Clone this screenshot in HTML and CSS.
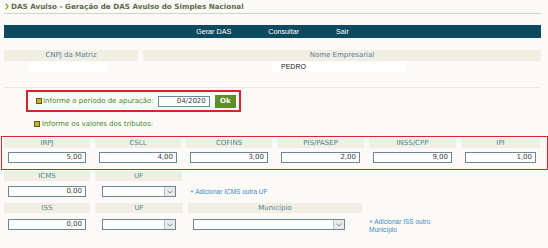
FILE: index.html
```html
<!DOCTYPE html>
<html lang="pt-BR">
<head>
<meta charset="utf-8">
<title>DAS Avulso</title>
<link rel="stylesheet" href="styles.css">
</head>
<body>
<div class="page">
  <h1 class="title"><svg class="arrow" width="4" height="7" viewBox="0 0 4 7"><polyline points="0.8,0.8 3,3.5 0.8,6.2" fill="none" stroke="#7fb52a" stroke-width="1.4"/></svg>DAS Avulso - Geração de DAS Avulso do Simples Nacional</h1>

  <nav class="menu"><a>Gerar DAS</a><a>Consultar</a><a>Sair</a></nav>

  <div class="info">
    <div class="info-col cnpj">
      <div class="hdr">CNPJ da Matriz</div>
      <div class="val"><span class="vbox cnpj-box"></span></div>
    </div>
    <div class="info-col nome">
      <div class="hdr">Nome Empresarial</div>
      <div class="val"><span class="vbox nome-box">PEDRO</span></div>
    </div>
  </div>

  <div class="sep"></div>

  <div class="periodo">
    <span class="bullet"></span><span class="glabel">Informe o período de apuração:</span>
    <span class="field periodo-input">04/2020</span>
    <span class="ok">Ok</span>
  </div>

  <div class="valores-label"><span class="bullet"></span><span class="glabel">Informe os valores dos tributos:</span></div>

  <div class="tributos">
    <div class="tcol"><div class="hdr">IRPJ</div><span class="field">5,00</span></div>
    <div class="tcol"><div class="hdr">CSLL</div><span class="field">4,00</span></div>
    <div class="tcol"><div class="hdr">COFINS</div><span class="field">3,00</span></div>
    <div class="tcol"><div class="hdr">PIS/PASEP</div><span class="field">2,00</span></div>
    <div class="tcol"><div class="hdr">INSS/CPP</div><span class="field">9,00</span></div>
    <div class="tcol"><div class="hdr">IPI</div><span class="field">1,00</span></div>
  </div>

  <div class="row icms">
    <div class="tcol"><div class="hdr">ICMS</div><span class="field">0,00</span></div>
    <div class="tcol"><div class="hdr">UF</div><span class="select uf"><span class="sarrow"><svg width="6" height="4" viewBox="0 0 6 4"><polyline points="0.5,0.8 3,3 5.5,0.8" fill="none" stroke="#8a8a8a" stroke-width="1"/></svg></span></span></div>
    <div class="linkcol"><a class="add">+ Adicionar ICMS outra UF</a></div>
  </div>

  <div class="row iss">
    <div class="tcol"><div class="hdr">ISS</div><span class="field">0,00</span></div>
    <div class="tcol uf-col"><div class="hdr">UF</div><span class="select uf"><span class="sarrow"><svg width="6" height="4" viewBox="0 0 6 4"><polyline points="0.5,0.8 3,3 5.5,0.8" fill="none" stroke="#8a8a8a" stroke-width="1"/></svg></span></span></div>
    <div class="tcol mun-col"><div class="hdr">Município</div><span class="select mun"><span class="sarrow"><svg width="6" height="4" viewBox="0 0 6 4"><polyline points="0.5,0.8 3,3 5.5,0.8" fill="none" stroke="#8a8a8a" stroke-width="1"/></svg></span></span></div>
    <div class="linkcol iss-link"><a class="add">+ Adicionar ISS outro Município</a></div>
  </div>
</div>
</body>
</html>
```

FILE: styles.css
```css
html, body {
  margin: 0;
  padding: 0;
}
body {
  background: #fbfaf7;
  font-family: "DejaVu Sans", Verdana, sans-serif;
  font-size: 7px;
  color: #333;
  width: 548px;
  height: 248px;
  overflow: hidden;
}
.page {
  width: 537px;
  padding-left: 4px;
}
.title {
  margin: 0;
  height: 13px;
  line-height: 14px;
  font-size: 7.2px;
  font-weight: bold;
  color: #5d6d4d;
  border-bottom: 1px solid #ccd6c4;
  display: flex;
  align-items: center;
}
.arrow {
  margin: 0 2px 0 1px;
}
.menu {
  margin-top: 11px;
  height: 13px;
  background: #0d4a5f;
  display: flex;
  justify-content: center;
  gap: 37px;
  align-items: center;
}
.menu a {
  color: #fff;
  font-family: "Liberation Sans", Arial, sans-serif;
  font-size: 7.2px;
}
.info {
  margin-top: 12px;
  display: flex;
  gap: 5px;
}
.hdr {
  height: 10px;
  line-height: 10px;
  background: #f1eee4;
  color: #55818f;
  text-align: center;
}
.info .hdr {
  height: 11px;
  line-height: 11px;
}
.cnpj { width: 134px; }
.nome { flex: 1; }
.val {
  height: 10px;
  margin-top: 1px;
}
.vbox {
  display: block;
  height: 10px;
  background: #fff;
}
.cnpj-box {
  margin-left: 24px;
  width: 80px;
}
.nome-box {
  margin-left: 129px;
  width: 135px;
  font-family: "Liberation Sans", Arial, sans-serif;
  font-size: 7px;
  line-height: 10px;
  color: #222;
  padding-left: 9px;
  box-sizing: border-box;
}
.sep {
  margin-top: 15px;
  height: 1px;
  background: #efe9dc;
}
.periodo {
  margin: 2px 0 0 22px;
  width: 203px;
  height: 18px;
  border: 2px solid #d5262e;
  display: flex;
  align-items: center;
  padding-left: 8px;
  box-sizing: content-box;
}
.bullet {
  width: 4px;
  height: 4px;
  border: 1px solid #5b5a1c;
  background: #c9b521;
  flex: none;
  margin-right: 1px;
}
.glabel {
  color: #3f8a26;
  white-space: nowrap;
}
.field {
  display: block;
  box-sizing: border-box;
  height: 11px;
  line-height: 9px;
  border: 1px solid #6a8895;
  background: #fff;
  text-align: right;
  padding-right: 3px;
  color: #3a3a3a;
  font-size: 7px;
}
.periodo-input {
  width: 52px;
  margin-left: 4px;
}
.ok {
  margin-left: 5px;
  width: 21px;
  height: 13px;
  line-height: 13px;
  background: #5d8e27;
  color: #fff;
  font-weight: bold;
  font-size: 7px;
  text-align: center;
}
.valores-label {
  margin: 7px 0 0 30px;
  height: 10px;
  display: flex;
  align-items: center;
}
.valores-label .bullet {
  margin-right: 2px;
}
.tributos {
  margin: 7px -7px 0 -3px;
  border: 1px solid #d5262e;
  padding: 1px 6px 6px 2px;
  display: grid;
  grid-template-columns: 86px 86px 86px 87px 87px 79px;
  column-gap: 5px;
}
.tcol .field {
  margin: 4px 4px 0 4px;
}
.row {
  display: grid;
  column-gap: 5px;
  margin-top: 1px;
}
.icms {
  grid-template-columns: 86px 87px auto;
}
.iss {
  margin-top: 6px;
  grid-template-columns: 86px 88px 174px auto;
}
.tcol .select {
  margin: 5px 0 0 7px;
}
.select {
  display: flex;
  justify-content: flex-end;
  box-sizing: border-box;
  height: 11px;
  border: 1px solid #6a8895;
  background: #fff;
}
.uf { width: 74px; }
.mun { width: 152px; }
.mun-col .select { margin-left: 5px; }
.sarrow {
  width: 10px;
  background: #e9e9e9;
  border-left: 1px solid #c4c4c4;
  display: flex;
  align-items: center;
  justify-content: center;
}
.icms .tcol .field { margin-top: 5px; }
.iss .tcol .field { margin-top: 6px; }
.iss .tcol .select { margin-top: 6px; }
.linkcol {
  padding: 17px 0 0 3px;
}
.add {
  color: #3b8bc6;
  font-family: "Liberation Sans", Arial, sans-serif;
  font-size: 6.5px;
  line-height: 8px;
}
.iss-link {
  padding: 15px 0 0 2px;
  width: 72px;
}
```
